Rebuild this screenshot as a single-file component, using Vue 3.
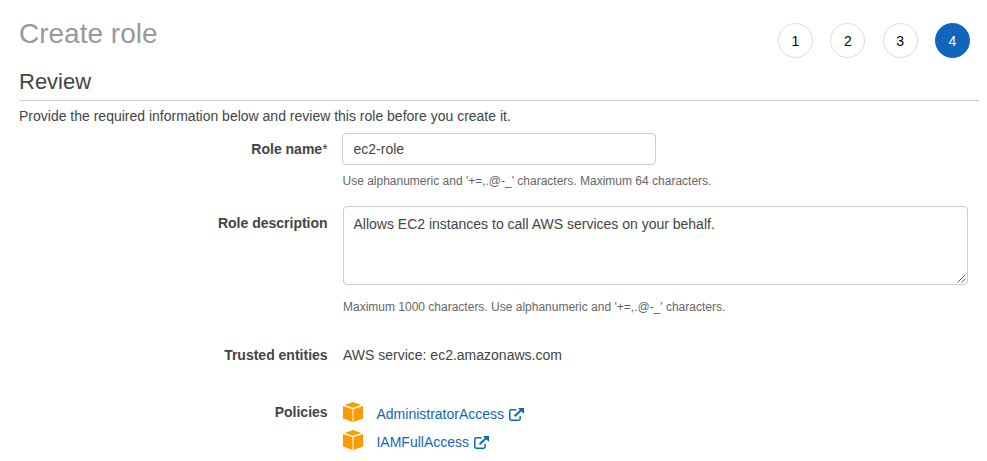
<script setup>
import { ref } from 'vue'

const steps = [1, 2, 3, 4]
const currentStep = ref(4)

const roleName = ref('ec2-role')
const roleDescription = ref('Allows EC2 instances to call AWS services on your behalf.')
const policies = ['AdministratorAccess', 'IAMFullAccess']
</script>

<template>
  <div class="create-role">
    <header class="header">
      <h1 class="title">Create role</h1>
      <div class="steps">
        <span
          v-for="step in steps"
          :key="step"
          class="step"
          :class="{ active: step === currentStep }"
        >{{ step }}</span>
      </div>
    </header>

    <h2 class="subtitle">Review</h2>
    <p class="intro">Provide the required information below and review this role before you create it.</p>

    <div class="row row-name">
      <label class="label" for="role-name">Role name<span class="required">*</span></label>
      <div class="field">
        <input id="role-name" v-model="roleName" class="input" type="text" spellcheck="false">
        <div class="hint">Use alphanumeric and '+=,.@-_' characters. Maximum 64 characters.</div>
      </div>
    </div>

    <div class="row row-description">
      <label class="label" for="role-description">Role description</label>
      <div class="field">
        <div class="textarea-wrap">
          <textarea id="role-description" v-model="roleDescription" class="textarea" spellcheck="false"></textarea>
          <svg class="grip" width="9" height="9" viewBox="0 0 9 9">
            <path d="M0.5 8.5L8.5 0.5M4.5 8.5L8.5 4.5" />
          </svg>
        </div>
        <div class="hint">Maximum 1000 characters. Use alphanumeric and '+=,.@-_' characters.</div>
      </div>
    </div>

    <div class="row row-trusted">
      <div class="label">Trusted entities</div>
      <div class="field">AWS service: ec2.amazonaws.com</div>
    </div>

    <div class="row row-policies">
      <div class="label">Policies</div>
      <ul class="policies">
        <li v-for="policy in policies" :key="policy" class="policy">
          <svg class="cube" width="20" height="20" viewBox="0 0 20 20">
            <path d="M10 0L18.3 2.9L10 5.8L1.7 2.9Z" />
            <path d="M0 4L9.5 7.2V20L0 16.4Z" />
            <path d="M20 4L10.5 7.2V20L20 16.4Z" />
          </svg>
          <a class="link" href="#" @click.prevent>{{ policy }}</a>
          <svg class="external" width="15" height="13" viewBox="0 0 15 13">
            <path class="frame" d="M7.5 1.8H2.2Q0.8 1.8 0.8 3.2V10.8Q0.8 12.2 2.2 12.2H9.8Q11.2 12.2 11.2 10.8V8" />
            <path class="shaft" d="M5.5 8.2L12 2.2" />
            <path class="head" d="M9 0H15V6Z" />
          </svg>
        </li>
      </ul>
    </div>
  </div>
</template>

<style>
body {
  background: #fff;
}
</style>

<style scoped>
.create-role {
  box-sizing: border-box;
  height: 461px;
  overflow: hidden;
  padding: 17px 8px 0 19px;
  font-family: "Liberation Sans", Arial, sans-serif;
  font-size: 14px;
  line-height: 20px;
  color: #444;
}

.header {
  display: flex;
  justify-content: space-between;
  height: 48px;
}

.title {
  margin: 0;
  font-size: 28px;
  line-height: 34px;
  font-weight: normal;
  color: #999;
}

.steps {
  display: flex;
  gap: 17.33px;
  padding: 6px 9px 0 0;
}

.step {
  box-sizing: border-box;
  width: 35px;
  height: 35px;
  border: 1px solid #ddd;
  border-radius: 50%;
  line-height: 34px;
  text-align: center;
  color: #000;
}

.step.active {
  background: #1166bb;
  border-color: #1166bb;
  color: #fff;
}

.subtitle {
  margin: 0;
  height: 35px;
  border-bottom: 1px solid #ccc;
  font-size: 22px;
  line-height: 33px;
  font-weight: normal;
}

.intro {
  margin: 5px 0 0;
}

.row {
  display: flex;
}

.label {
  width: 308.6px;
  margin-right: 15.4px;
  text-align: right;
  font-weight: bold;
}

.required {
  font-weight: normal;
}

.row-name {
  margin-top: 7px;
  height: 73px;
}

.row-name .label {
  padding-top: 6px;
  margin-right: 14.4px;
}

.input {
  display: block;
  box-sizing: border-box;
  width: 314px;
  height: 32px;
  padding: 0 10.5px;
  border: 1px solid #ccc;
  border-radius: 4px;
  background: #fff;
  font: inherit;
  color: inherit;
  outline: none;
}

.hint {
  font-size: 12px;
  line-height: 18px;
  color: #666;
}

.row-name .hint {
  margin-top: 7px;
  padding-left: 0.5px;
}

.row-description {
  height: 139px;
}

.row-description .label {
  padding-top: 7px;
}

.textarea-wrap {
  position: relative;
  width: 625px;
}

.textarea {
  display: block;
  box-sizing: border-box;
  width: 625px;
  height: 79px;
  padding: 7px 9.5px;
  border: 1px solid #ccc;
  border-radius: 4px;
  background: #fff;
  font: inherit;
  color: inherit;
  outline: none;
  resize: none;
}

.grip {
  position: absolute;
  right: 2px;
  bottom: 2px;
  fill: none;
  stroke: #555;
  stroke-width: 0.9;
}

.row-description .hint {
  margin-top: 13px;
}

.row-trusted {
  height: 57px;
}

.policies {
  margin: 0;
  padding: 0;
  list-style: none;
}

.policy {
  display: flex;
  height: 28px;
}

.cube {
  fill: #ff9900;
}

.link {
  margin: 2px 4.5px 0 13.5px;
  color: #1166bb;
  text-decoration: none;
}

.external {
  margin-top: 6px;
}

.frame {
  fill: none;
  stroke: #1166bb;
  stroke-width: 1.5;
}

.shaft {
  stroke: #1166bb;
  stroke-width: 2;
}

.head {
  fill: #1166bb;
}
</style>
